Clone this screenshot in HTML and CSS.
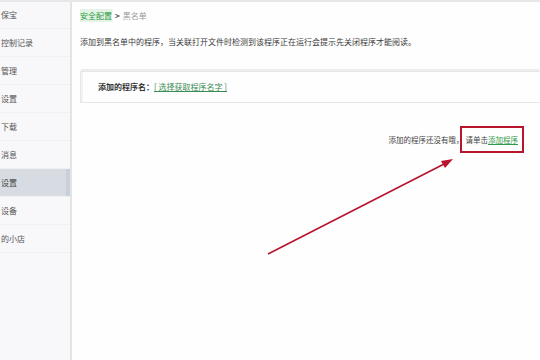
FILE: index.html
```html
<!DOCTYPE html>
<html lang="zh">
<head>
<meta charset="utf-8">
<title>黑名单</title>
<link rel="stylesheet" href="styles.css">
</head>
<body>
<div class="app">
  <nav class="sidebar">
    <div class="item">保宝</div>
    <div class="item">控制记录</div>
    <div class="item">管理</div>
    <div class="item">设置</div>
    <div class="item">下载</div>
    <div class="item">消息</div>
    <div class="item active">设置</div>
    <div class="item">设备</div>
    <div class="item">的小店</div>
  </nav>
  <main class="main">
    <div class="crumb"><a class="crumb-link">安全配置</a><span class="sep">&gt;</span><span class="crumb-cur">黑名单</span></div>
    <p class="desc">添加到黑名单中的程序，当关联打开文件时检测到该程序正在运行会提示先关闭程序才能阅读。</p>
    <div class="box">
      <span class="label">添加的程序名：</span><a class="pick">[ 选择获取程序名字 ]</a>
    </div>
    <div class="empty">
      <span>添加的程序还没有哦，</span><span class="hl">请单击<a class="add">添加程序</a></span>
    </div>
  </main>
  <svg class="arrow" width="540" height="360" viewBox="0 0 540 360">
    <line x1="268" y1="254" x2="446" y2="163" stroke="#b8142c" stroke-width="1.6"/>
    <polygon points="453,159 441,161 445,168" fill="#b8142c"/>
  </svg>
</div>
</body>
</html>
```
FILE: styles.css
```css
html, body {
  margin: 0;
  padding: 0;
}
body {
  font-family: "Noto Sans CJK SC", "Liberation Sans", sans-serif;
  background: #fefefe;
  color: #333;
}
.app {
  position: relative;
  display: flex;
  width: 540px;
  height: 360px;
  border-top: 2px solid #e7e7e7;
  box-sizing: border-box;
  overflow: hidden;
}
.sidebar {
  width: 70px;
  flex: none;
  background: #f8f7fa;
  border-right: 2px solid #e4e4e6;
  margin-top: -1px;
}
.item {
  height: 28px;
  line-height: 28px;
  font-size: 8px;
  color: #555;
  white-space: nowrap;
  padding-left: 1px;
  border-bottom: 1px solid #f1f0f3;
  box-sizing: border-box;
}
.item.active {
  background: #d6dce2;
  box-shadow: inset -4px 0 0 #cad0d7;
  color: #444;
}
.main {
  flex: 1;
  padding-left: 8px;
  font-size: 8px;
}
.crumb {
  margin-top: 8px;
  height: 12px;
  line-height: 12px;
  color: #444;
}
.crumb-link {
  color: #2e9a45;
  background: #e3f4e6;
  padding: 1px 0;
}
.sep {
  margin: 0 3px;
  font-weight: bold;
  color: #555;
}
.crumb-cur {
  color: #999;
}
.desc {
  margin: 14px 0 0;
  line-height: 12px;
  height: 12px;
  color: #3a3a3a;
}
.box {
  margin-top: 23px;
  height: 30px;
  line-height: 30px;
  border: 1px solid #e6e6e6;
  border-right: none;
  box-shadow: 0 -3px 0 -1px #ececec, inset 2px 0 0 #f3f3f3;
  padding-left: 17px;
  font-size: 8px;
}
.label {
  font-weight: bold;
  color: #333;
}
.pick {
  color: #3a8c55;
  text-decoration: underline;
}
.empty {
  margin-top: 31px;
  padding-right: 22px;
  text-align: right;
  line-height: 12px;
  font-size: 7.5px;
  color: #444;
}
.hl {
  position: relative;
  margin-left: 2px;
}
.hl::after {
  content: "";
  position: absolute;
  left: -6px;
  right: -6px;
  top: -8px;
  bottom: -8px;
  border: 2px solid #b8142c;
}
.add {
  color: #2e9a45;
  text-decoration: underline;
}
.arrow {
  position: absolute;
  left: 0;
  top: -2px;
  pointer-events: none;
}
```
